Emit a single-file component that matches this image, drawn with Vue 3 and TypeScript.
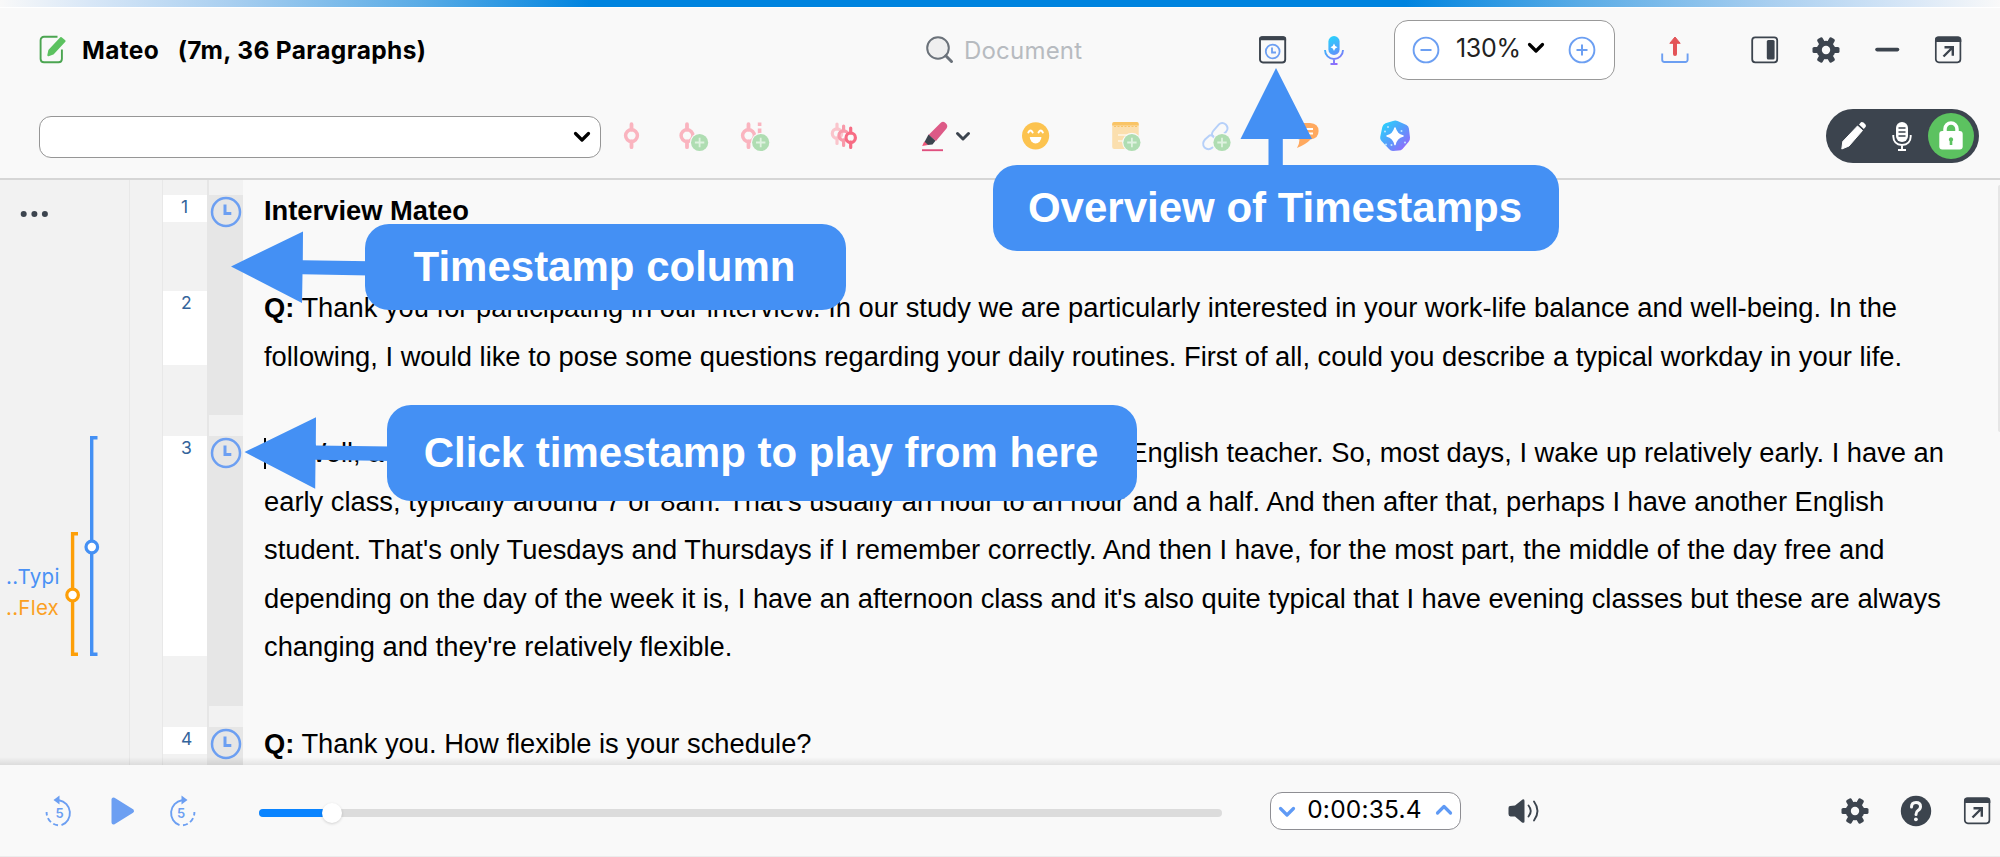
<script setup lang="ts">
interface Line {
  lead?: string
  text?: string
  heading?: boolean
  caret?: boolean
  tail?: string
}

interface Block {
  height: number
  label?: string
}

const lines: Line[] = [
  { text: 'Interview Mateo', heading: true },
  {},
  { lead: 'Q:', text: 'Thank you for participating in our interview. In our study we are particularly interested in your work-life balance and well-being. In the' },
  { text: 'following, I would like to pose some questions regarding your daily routines. First of all, could you describe a typical workday in your life.' },
  {},
  { lead: 'R:', text: 'Well, a', caret: true, tail: 'English teacher. So, most days, I wake up relatively early. I have an' },
  { text: "early class, typically around 7 or 8am. That's usually an hour to an hour and a half. And then after that, perhaps I have another English" },
  { text: "student. That's only Tuesdays and Thursdays if I remember correctly. And then I have, for the most part, the middle of the day free and" },
  { text: "depending on the day of the week it is, I have an afternoon class and it's also quite typical that I have evening classes but these are always" },
  { text: "changing and they're relatively flexible." },
  {},
  { lead: 'Q:', text: 'Thank you. How flexible is your schedule?' },
]

const numberBlocks: Block[] = [
  { height: 15 },
  { height: 27, label: '1' },
  { height: 69 },
  { height: 74, label: '2' },
  { height: 71 },
  { height: 220, label: '3' },
  { height: 71 },
  { height: 27, label: '4' },
]

const timeBlocks: (Block & { stamp?: boolean })[] = [
  { height: 15 },
  { height: 220, stamp: true },
  { height: 21 },
  { height: 270, stamp: true },
  { height: 21 },
  { height: 38, stamp: true },
]

const teeth = [0, 60, 120]
</script>

<template>
  <div class="app">
    <svg class="defs" width="0" height="0" aria-hidden="true">
      <defs>
        <linearGradient id="ai" x1="0" y1="0" x2="1" y2="1">
          <stop offset="0.1" stop-color="#2bd0fc" />
          <stop offset="0.5" stop-color="#559dfb" />
          <stop offset="0.95" stop-color="#9b62fb" />
        </linearGradient>
        <linearGradient id="mic" gradientUnits="userSpaceOnUse" x1="8" y1="2" x2="24" y2="31">
          <stop offset="0.1" stop-color="#2bd0fc" />
          <stop offset="0.55" stop-color="#559dfb" />
          <stop offset="0.95" stop-color="#9b62fb" />
        </linearGradient>
      </defs>
      <symbol id="gear" viewBox="0 0 32 32">
        <mask id="hole">
          <rect width="32" height="32" fill="#fff" />
          <circle cx="16" cy="16" r="4.2" fill="#000" />
        </mask>
        <g fill="#3c444e" mask="url(#hole)">
          <circle cx="16" cy="16" r="9.3" />
          <rect v-for="t in teeth" :key="t" x="2.5" y="12.9" width="27" height="6.2" rx="1.6" :transform="`rotate(${t} 16 16)`" />
        </g>
      </symbol>
      <symbol id="popout" viewBox="0 0 32 32">
        <rect x="3.8" y="3.3" width="24.6" height="25" rx="3" fill="none" stroke="#3c444e" stroke-width="1.7" />
        <path d="M3 8V5.5A3 3 0 0 1 6 2.500H26.300A3 3 0 0 1 29.300 5.500V8Z" fill="#3c444e" />
        <path d="M11.500 22.500L20.500 13.500M12.500 13.300H20.800V21.800" fill="none" stroke="#3c444e" stroke-width="2.400" />
      </symbol>
      <symbol id="code" viewBox="0 0 32 32">
        <path d="M15.500 4.200V9.500M15.500 21.500V27.200" stroke="currentColor" stroke-width="3.800" stroke-linecap="round" />
        <circle cx="15.500" cy="15.600" r="5.900" fill="none" stroke="currentColor" stroke-width="3.500" />
      </symbol>
      <symbol id="badge" viewBox="0 0 20 20">
        <circle cx="10" cy="10" r="9.700" fill="#f9f9f9" />
        <circle cx="10" cy="10" r="8.600" fill="#afddb2" />
        <path d="M10 5.300V14.700M5.300 10H14.700" stroke="#dff2e0" stroke-width="1.800" />
      </symbol>
      <symbol id="clock" viewBox="0 0 34 34">
        <circle cx="17" cy="17" r="14" fill="none" stroke="#6c9ff2" stroke-width="2.500" />
        <path d="M16 9.500V18.400H22.300" fill="none" stroke="#6c9ff2" stroke-width="3" />
      </symbol>
    </svg>

    <div class="accent"></div>

    <header class="titlebar">
      <div class="title">
        <svg class="icon" viewBox="0 0 32 32">
          <path d="M21.500 2.800H8A3.400 3.400 0 0 0 4.600 6.200V25A3.400 3.400 0 0 0 8 28.300H22.500A3.400 3.400 0 0 0 25.900 25V15.500" fill="none" stroke="#4ba551" stroke-width="1.900" />
          <path d="M25 4L28.600 7L17 19.500L12.300 21.200L13.300 16.500Z" fill="#5cc260" stroke="#5cc260" stroke-width="2" stroke-linejoin="round" />
        </svg>
        <span class="name">Mateo</span>
        <span class="meta">(7m, 36 Paragraphs)</span>
      </div>
      <div class="search">
        <svg class="icon" viewBox="0 0 32 32">
          <circle cx="14" cy="14" r="10.800" fill="#efefef" stroke="#6b727a" stroke-width="2" />
          <path d="M21.800 21.800L27.500 27.500" stroke="#6b727a" stroke-width="3" stroke-linecap="round" />
        </svg>
        <span class="placeholder">Document</span>
      </div>
      <svg class="icon" viewBox="0 0 32 32">
        <rect x="3" y="3.300" width="25.200" height="25.200" rx="3" fill="none" stroke="#3c444e" stroke-width="1.900" />
        <path d="M2 6.200V5A2.800 2.800 0 0 1 4.800 2.200H26.400A2.800 2.800 0 0 1 29.200 5V6.200Z" fill="#3c444e" />
        <circle cx="15.700" cy="17.500" r="6.900" fill="none" stroke="#6c9ff2" stroke-width="1.800" />
        <path d="M15 13.500V18.500H19" fill="none" stroke="#6c9ff2" stroke-width="1.800" />
      </svg>
      <svg class="icon assist" viewBox="0 0 32 32">
        <rect x="10.400" y="2" width="11.200" height="19" rx="5.600" fill="url(#mic)" />
        <path d="M7 16A9 9 0 0 0 25 16M16 25V30M12.500 30H19.500" fill="none" stroke="url(#mic)" stroke-width="1.900" />
        <path d="M16 9.500Q16.700 12.600 19.500 13.200Q16.700 13.800 16 17Q15.300 13.800 12.500 13.200Q15.300 12.600 16 9.500Z" fill="#fff" />
      </svg>
      <div class="zoom">
        <svg class="icon" viewBox="0 0 32 32">
          <circle cx="16" cy="16" r="12.400" fill="none" stroke="#6c9ff2" stroke-width="1.900" />
          <path d="M10.500 16H21.500" stroke="#6c9ff2" stroke-width="2" />
        </svg>
        <span class="percent">130%</span>
        <svg class="chevron" viewBox="0 0 18 12"><path d="M2.500 2.500L9 9L15.500 2.500" /></svg>
        <svg class="icon plus" viewBox="0 0 32 32">
          <circle cx="16" cy="16" r="12.400" fill="none" stroke="#6c9ff2" stroke-width="1.900" />
          <path d="M10.500 16H21.500M16 10.500V21.500" stroke="#6c9ff2" stroke-width="2" />
        </svg>
      </div>
      <svg class="icon export" viewBox="0 0 32 32">
        <path d="M3.200 19.500V25.800A2.200 2.200 0 0 0 5.400 28H26.400A2.200 2.200 0 0 0 28.600 25.800V19.500" fill="none" stroke="#6c9ff2" stroke-width="1.900" />
        <path d="M16 20V7" stroke="#e35458" stroke-width="4" stroke-linecap="round" />
        <path d="M16 3L21.200 9.300H10.800Z" fill="#e35458" stroke="#e35458" stroke-linejoin="round" />
      </svg>
      <div class="window-tools">
        <svg class="icon" viewBox="0 0 32 32">
          <rect x="3.200" y="3.300" width="25" height="25" rx="3" fill="none" stroke="#3c444e" stroke-width="1.800" />
          <rect x="17.800" y="6" width="7.800" height="19.500" rx="1.500" fill="#3c444e" />
        </svg>
        <svg class="icon"><use href="#gear" /></svg>
        <svg class="icon" viewBox="0 0 32 32"><path d="M6 15.600H26.500" stroke="#3c444e" stroke-width="3.600" stroke-linecap="round" /></svg>
        <svg class="icon"><use href="#popout" /></svg>
      </div>
    </header>

    <div class="toolbar">
      <div class="select">
        <svg class="chevron" viewBox="0 0 18 12"><path d="M2.500 2.500L9 9L15.500 2.500" /></svg>
      </div>
      <div class="coding">
        <svg class="icon" viewBox="0 0 32 32"><use href="#code" width="32" height="32" /></svg>
        <svg class="icon" viewBox="0 0 32 32">
          <use href="#code" x="-6.500" width="32" height="32" />
          <use href="#badge" x="11.600" y="12.500" width="20" height="20" />
        </svg>
        <svg class="icon" viewBox="0 0 32 32">
          <use href="#code" x="-7" width="32" height="32" />
          <path d="M19.600 2.500V6M19.600 8.500V14" stroke="currentColor" stroke-width="3.600" />
          <use href="#badge" x="10.700" y="12.500" width="20" height="20" />
        </svg>
      </div>
      <svg class="icon multi" viewBox="0 0 32 32">
        <g fill="none" stroke-width="3.200" stroke-linecap="round">
          <g stroke="#fac5cc"><circle cx="9" cy="13.500" r="4.700" /><path d="M9 4V9M9 18V23.500" /></g>
          <g stroke="#f89aaa"><circle cx="15.600" cy="15.500" r="4.700" /><path d="M15.600 6V11M15.600 20V25.500" /></g>
          <g stroke="#f76c84"><circle cx="22.700" cy="17.700" r="4.700" fill="#f9f9f9" /><path d="M22.700 8V13M22.700 22V27.500" /></g>
        </g>
      </svg>
      <svg class="highlighter" viewBox="0 0 56 32">
        <path d="M22 3.500Q24.500 0.500 27.500 3Q30.500 5.500 28.500 8.500L18 21L10.500 15Z" fill="#dd5a87" />
        <path d="M10.500 14.500L17.500 20.800L14.500 24.500L9.500 25L6.500 22Z" fill="#3c444e" />
        <path d="M6.200 21.500L10 25L4.200 26Z" fill="#ee5578" />
        <path d="M4 30.200H25" stroke="#e0507f" stroke-width="1.900" />
        <path d="M39.500 13.500L45 19L50.500 13.500" fill="none" stroke="#3c444e" stroke-width="3" stroke-linecap="round" stroke-linejoin="round" />
      </svg>
      <svg class="icon smiley" viewBox="0 0 32 32">
        <circle cx="15.600" cy="15.800" r="13.600" fill="#fcc34f" />
        <path d="M8.300 12.500Q10.500 8.500 12.700 12.500M18.500 12.500Q20.700 8.500 22.900 12.500" fill="none" stroke="#fff" stroke-width="1.900" stroke-linecap="round" />
        <path d="M9.800 17H21.400A5.800 6.500 0 0 1 9.800 17Z" fill="#fff" />
      </svg>
      <svg class="icon spaced" viewBox="0 0 32 32">
        <rect x="2.200" y="2" width="26.500" height="27" rx="2" fill="#fbdfae" />
        <path d="M2.200 5.500V4A2 2 0 0 1 4.200 2H26.700A2 2 0 0 1 28.700 4V5.500Z" fill="#f9c466" />
        <path d="M4 6.500H28" stroke="#f9c466" stroke-width="1.200" stroke-dasharray="2 1.500" />
        <path d="M8 15H24M8 21H18" stroke="#fdf0d8" stroke-width="1.800" />
        <use href="#badge" x="11.900" y="12.500" width="20" height="20" />
      </svg>
      <svg class="icon spaced" viewBox="0 0 32 32">
        <g fill="none" stroke="#b6d0f9" stroke-width="1.900" stroke-linecap="round">
          <path d="M12.800 16.500Q10.800 14 13.500 10.500L18.500 4.800Q22 1.500 25.800 4.500Q29 8 26.300 11.500L21.500 16" />
          <path d="M9.500 15.500L5 19.500Q1.500 23.500 4.500 27.500Q8.500 31 12.500 27.500M9.500 15.500Q13 14.500 14 17.500" />
        </g>
        <use href="#badge" x="12" y="12.500" width="20" height="20" />
      </svg>
      <svg class="icon spaced" viewBox="0 0 32 32">
        <path d="M11 3H20Q28.600 3.500 28.600 11Q28.600 18.500 20.500 19.500Q16.500 24 7 28Q9.500 23.500 9.500 19.500Q2 18 2 11Q2 3.500 11 3Z" fill="#ffa95f" />
        <path d="M8 9H23M8 13.500H23" stroke="#fff" stroke-width="1.900" />
      </svg>
      <svg class="icon ai" viewBox="0 0 32 32">
        <path d="M14 0.900Q16.500 0 18.500 1L27.500 5Q29.700 6.200 29.900 8.500L31 17.500Q31.200 20 29.500 22L23.500 29Q22 30.500 19.500 30.500L14 31Q11.500 31 10 29L2.500 21Q0.800 19.200 1.200 17L3.300 7Q4 4.300 6.500 3.200Z" fill="url(#ai)" />
        <path d="M16 8Q17.500 14.500 24 16Q17.500 17.500 16 24.500Q14.500 17.500 8 16Q14.500 14.500 16 8Z" fill="#fff" stroke="#fff" stroke-width="1.500" stroke-linejoin="round" />
        <g fill="#bfe6ff"><circle cx="9" cy="7" r="1" /><circle cx="6" cy="11.500" r="1" /><circle cx="22.500" cy="11" r="1" /><circle cx="26" cy="22.500" r="1" /><circle cx="7" cy="24.500" r="1" /><circle cx="12.500" cy="25" r="1" /></g>
      </svg>
      <div class="mode">
        <svg class="icon" viewBox="0 0 32 32">
          <path d="M20.500 6L25.500 10.500L12 26L4.800 29L5.800 21.500Z" fill="#fff" stroke="#fff" stroke-linejoin="round" />
          <path d="M22 4.500L24 2.200Q25 1.500 26.500 2.500L28.500 4.500Q29.500 6 28.500 7L26.800 9Z" fill="#fff" />
        </svg>
        <svg class="icon mode-mic" viewBox="0 0 32 32">
          <rect x="10" y="2" width="12" height="20" rx="6" fill="#fff" />
          <path d="M12.500 8H19.500M12.500 12H19.500M12.500 16H19.500" stroke="#3c444e" stroke-width="1.700" />
          <path d="M7.300 15V16.500Q7.500 24.500 16 25Q24.500 24.500 24.700 16.500V15M16 25V30M12 30H20" fill="none" stroke="#fff" stroke-width="1.900" />
        </svg>
        <div class="lock">
          <svg class="icon" viewBox="0 0 32 32">
            <path d="M10 13V9A6 6 0 0 1 22 9V13" fill="none" stroke="#fff" stroke-width="3.500" />
            <rect x="4.300" y="11" width="23.400" height="18.500" rx="3" fill="#fff" />
            <path d="M16 17.200A2.300 2.300 0 0 1 17.300 21.300V25H14.700V21.300A2.300 2.300 0 0 1 16 17.200Z" fill="#5cc260" />
          </svg>
        </div>
      </div>
    </div>

    <main class="document">
      <aside class="codes">
        <svg class="stripes" viewBox="0 0 129 585">
          <g fill="#3c444e"><circle cx="23.700" cy="34" r="3" /><circle cx="34.400" cy="34" r="3" /><circle cx="44.900" cy="34" r="3" /></g>
          <g fill="none" stroke-width="3.400">
            <path d="M97.500 257.700H91.700V474.300H97.500" stroke="#4490f4" />
            <circle cx="91.800" cy="367" r="5.800" fill="#fff" stroke="#4490f4" stroke-width="3.200" />
            <path d="M78 353.700H72.600V474.300H78" stroke="#fd9f08" />
            <circle cx="72.600" cy="415" r="5.800" fill="#fff" stroke="#fd9f08" stroke-width="3.200" />
          </g>
          <g class="code-label">
            <text x="6" y="404" fill="#4a91f5">..Typi</text>
            <text x="6" y="434.700" fill="#fba022">..Flex</text>
          </g>
        </svg>
      </aside>
      <div class="spacer"></div>
      <div class="numbers">
        <div v-for="(b, i) in numberBlocks" :key="i" :class="{ cell: b.label }" :style="{ height: b.height + 'px' }">{{ b.label }}</div>
      </div>
      <div class="times">
        <div v-for="(b, i) in timeBlocks" :key="i" :class="{ stamp: b.stamp }" :style="{ height: b.height + 'px' }">
          <svg v-if="b.stamp" width="34" height="34"><use href="#clock" /></svg>
        </div>
      </div>
      <article class="transcript">
        <p v-for="(l, i) in lines" :key="i" :class="{ heading: l.heading, split: l.tail }">
          <span><i v-if="l.caret" class="caret"></i><b v-if="l.lead">{{ l.lead }}</b>{{ l.lead ? ' ' : '' }}{{ l.text }}</span>
          <span v-if="l.tail">{{ l.tail }}</span>
        </p>
      </article>
      <div class="scrollbar"></div>
    </main>

    <footer class="player">
      <svg class="icon" viewBox="0 0 32 32">
        <g fill="none" stroke="#6c9ff2" stroke-width="1.900">
          <path d="M15 5.200A13 13 0 0 1 17.500 30.200" />
          <path d="M14 30.300A13 13 0 0 1 2.600 17" stroke-dasharray="5 2.800" />
        </g>
        <path d="M9.500 5L15.500 0.500V9.500Z" fill="#6c9ff2" />
        <text x="15.500" y="23" class="skip">5</text>
      </svg>
      <svg class="icon play" viewBox="0 0 32 32"><path d="M7.500 4.500V27.500L26 16Z" fill="#6c9ff2" stroke="#6c9ff2" stroke-width="4" stroke-linejoin="round" /></svg>
      <svg class="icon forward" viewBox="0 0 32 32">
        <g fill="none" stroke="#6c9ff2" stroke-width="1.900">
          <path d="M17 5.200A13 13 0 0 0 14.500 30.200" />
          <path d="M18 30.300A13 13 0 0 0 29.400 17" stroke-dasharray="5 2.800" />
        </g>
        <path d="M22.500 5L16.500 0.500V9.500Z" fill="#6c9ff2" />
        <text x="16" y="23" class="skip">5</text>
      </svg>
      <div class="track"><div class="fill"></div><div class="thumb"></div></div>
      <div class="time">
        <svg class="chevron blue" viewBox="0 0 18 12"><path d="M2.500 2.500L9 9L15.500 2.500" /></svg>
        <span>0:00:35.4</span>
        <svg class="chevron blue up" viewBox="0 0 18 12"><path d="M2.500 9L9 2.500L15.500 9" /></svg>
      </div>
      <svg class="icon speaker" viewBox="0 0 32 32">
        <path d="M2 11Q0.500 11 0.500 13V19Q0.500 21 2.500 21.500H7L14 27.500Q16.500 28.500 16.500 26.500V6Q16.500 3.500 14.500 4.500L7 10.500Z" fill="#3c444e" />
        <path d="M20.500 10.500Q25 16 20.500 21.500M26 6.500Q33 16 26 25.500" fill="none" stroke="#3c444e" stroke-width="1.900" stroke-linecap="round" />
      </svg>
      <div class="player-tools">
        <svg class="icon"><use href="#gear" /></svg>
        <svg class="icon" viewBox="0 0 32 32">
          <circle cx="16" cy="16" r="15.200" fill="#3c444e" />
          <path d="M11.500 12Q11.500 7.500 16 7.500Q20.500 7.500 20.500 11.500Q20.500 14 18 15.500Q16 16.800 16 19.500" fill="none" stroke="#f9f9f9" stroke-width="3" stroke-linecap="round" />
          <circle cx="15.900" cy="24.300" r="1.900" fill="#f9f9f9" />
        </svg>
        <svg class="icon"><use href="#popout" /></svg>
      </div>
    </footer>

    <svg class="arrows" viewBox="0 0 2000 857" aria-hidden="true">
      <g fill="#4490f4">
        <path d="M1276 68L1312 139H1282.800V170H1268.500V139H1240.500Z" />
        <path d="M231 266.500L303 231.500L302.800 260.300L370 261.200V275.600L302.500 274.300L302 303Z" />
        <path d="M244.500 452L316 417.300L315.800 445.500L390 446.500V461L315.500 459.700L315.200 488.700Z" />
      </g>
    </svg>
    <div class="callout overview">Overview of Timestamps</div>
    <div class="callout column">Timestamp column</div>
    <div class="callout click">Click timestamp to play from here</div>
  </div>
</template>

<style>
body {
  margin: 0;
  overflow: hidden;
}
</style>

<style scoped>
.app {
  position: relative;
  display: flex;
  flex-direction: column;
  width: 2000px;
  height: 857px;
  overflow: hidden;
  background: #f9f9f9;
  color: #000;
  font-family: Inter, "Liberation Sans", sans-serif;
}
.defs { position: absolute; }
.accent {
  flex: none;
  height: 7px;
  border-bottom: 1px solid #fff;
  background: linear-gradient(90deg, #f9f9f9 0, #d8e7f7 90px, #a9cff0 230px, #5aace6 420px, #0084df 590px, #0084df 1405px, #5aace6 1580px, #a9cff0 1770px, #d8e7f7 1910px, #f9f9f9 2000px);
  margin-bottom: -1px;
}
.icon { flex: none; display: block; width: 32px; height: 32px; overflow: visible; }
.chevron {
  flex: none;
  width: 18px;
  height: 12px;
  fill: none;
  stroke: #000;
  stroke-width: 3.2;
  stroke-linecap: round;
  stroke-linejoin: round;
}
.chevron.blue { stroke: #5f9af5; stroke-width: 3.2; }

.titlebar { flex: none; display: flex; align-items: center; height: 86px; padding-left: 36px; }
.title { display: flex; align-items: center; width: 888px; font-size: 24.5px; font-weight: 650; letter-spacing: 0.35px; white-space: nowrap; }
.name { margin-left: 14px; }
.meta { margin-left: 18.5px; }
.search { display: flex; align-items: center; width: 333px; font-size: 24px; letter-spacing: 0.2px; color: #b7bbc0; }
.placeholder { margin-left: 8px; }
.assist { margin-left: 29px; }
.zoom {
  box-sizing: border-box;
  display: flex;
  align-items: center;
  width: 221px;
  height: 60px;
  margin-left: 44px;
  padding-left: 15px;
  border: 1.5px solid #999;
  border-radius: 14px;
  background: #fff;
}
.percent { width: 66px; margin: -5px 0 0 14px; font-size: 25px; letter-spacing: -0.3px; color: #222; }
.zoom .chevron { margin: -5px 0 0 5px; }
.plus { margin-left: 21px; }
.export { margin-left: 44px; }
.window-tools { display: flex; gap: 29px; margin-left: 58px; }

.toolbar {
  box-sizing: border-box;
  flex: none;
  display: flex;
  align-items: center;
  height: 87px;
  padding: 1px 21px 0 39px;
  border-bottom: 2px solid #d6d6d6;
}
.select {
  box-sizing: border-box;
  display: flex;
  align-items: center;
  justify-content: flex-end;
  width: 562px;
  height: 42px;
  margin-top: 2px;
  padding-right: 9px;
  border: 1.5px solid #969696;
  border-radius: 12px;
  background: #fff;
}
.coding { display: flex; gap: 30px; margin-left: 15px; color: #fab4bf; }
.multi { margin-left: 56px; }
.highlighter { width: 56px; height: 32px; margin-left: 58px; }
.smiley { margin-left: 46px; }
.spaced { margin-left: 58px; }
.ai { margin-left: 57px; }
.mode {
  box-sizing: border-box;
  display: flex;
  align-items: center;
  width: 153px;
  height: 54px;
  margin-left: auto;
  padding-left: 11px;
  border-radius: 27px;
  background: #3c444e;
}
.mode-mic { margin-left: 17px; }
.lock { display: grid; place-items: center; width: 46px; height: 46px; margin-left: 10px; border-radius: 50%; background: #5cc260; }

.document { position: relative; flex: none; display: flex; height: 585px; overflow: hidden; }
.document::after {
  content: "";
  position: absolute;
  inset: auto 0 0;
  height: 8px;
  background: linear-gradient(rgba(0, 0, 0, 0), rgba(0, 0, 0, 0.09));
}
.codes { width: 129px; background: #f2f2f2; }
.stripes { display: block; width: 129px; height: 585px; }
.code-label { font-size: 20.5px; letter-spacing: 0.25px; }
.spacer { box-sizing: border-box; width: 34px; border: solid #e8e8e8; border-width: 0 1.5px; background: #f2f2f2; }
.numbers { width: 44px; background: #f2f2f2; }
.numbers div { box-sizing: border-box; padding-left: 18px; font-size: 17.5px; line-height: 23px; color: #34649b; }
.numbers .cell { background: #fff; }
.times { box-sizing: border-box; width: 36px; border-left: 2px solid #e6e6e6; background: #f2f2f2; }
.stamp { overflow: hidden; background: #e6e6e6; }
.stamp svg { display: block; }
.transcript {
  flex: 1;
  padding: 7.3px 0 0 21px;
  font: 27.32px "Liberation Sans", Arial, sans-serif;
}
.transcript p { width: 1680px; height: 48.45px; margin: 0; line-height: 48.45px; white-space: nowrap; }
.transcript .heading { font-weight: 700; }
.transcript .split { display: flex; justify-content: space-between; }
.caret { display: inline-block; width: 2px; height: 31px; margin-right: -2px; vertical-align: -7px; background: #000; }
.scrollbar { width: 2px; margin: 5px 0 333px; border-radius: 2px 0 0 2px; background: #e6e6e6; }

.player { flex: 1; display: flex; align-items: center; padding: 0 7px 0 44px; border-bottom: 1px solid #ececec; }
.skip { font-size: 13px; font-weight: 600; fill: #6c9ff2; text-anchor: middle; }
.play { margin-left: 30px; }
.forward { margin-left: 27px; }
.track { position: relative; width: 963px; height: 8px; margin: 4px 0 0 62px; border-radius: 4px; background: #dcdcdc; }
.fill { width: 73px; height: 8px; border-radius: 4px; background: #0a84ff; }
.thumb { position: absolute; left: 63px; top: -6px; width: 20px; height: 20px; border-radius: 50%; background: #fff; box-shadow: 0 1px 3px rgba(0, 0, 0, 0.16); }
.time {
  box-sizing: border-box;
  display: flex;
  align-items: center;
  justify-content: space-between;
  width: 191px;
  height: 38px;
  margin-left: 48px;
  padding: 0 7px;
  border: 1.5px solid #8e8e93;
  border-radius: 12px;
  background: #fff;
}
.time span { margin: -3px 2px 0 0; font-size: 24.5px; letter-spacing: 0.2px; }
.time .chevron { margin-top: 2px; }
.time .up { margin-top: -1px; }
.speaker { margin-left: 47px; }
.player-tools { display: flex; gap: 29px; margin-left: auto; }

.arrows { position: absolute; inset: 0; width: 2000px; height: 857px; }
.callout {
  position: absolute;
  box-sizing: border-box;
  display: grid;
  place-items: center;
  padding-right: 2px;
  border-radius: 24px;
  background: #4490f4;
  color: #fff;
  font: 700 42px "Liberation Sans", Arial, sans-serif;
  white-space: nowrap;
}
.overview { left: 993px; top: 165px; width: 566px; height: 86px; }
.column { left: 365px; top: 224px; width: 481px; height: 86px; }
.click { left: 387px; top: 405px; width: 750px; height: 96px; }
</style>
